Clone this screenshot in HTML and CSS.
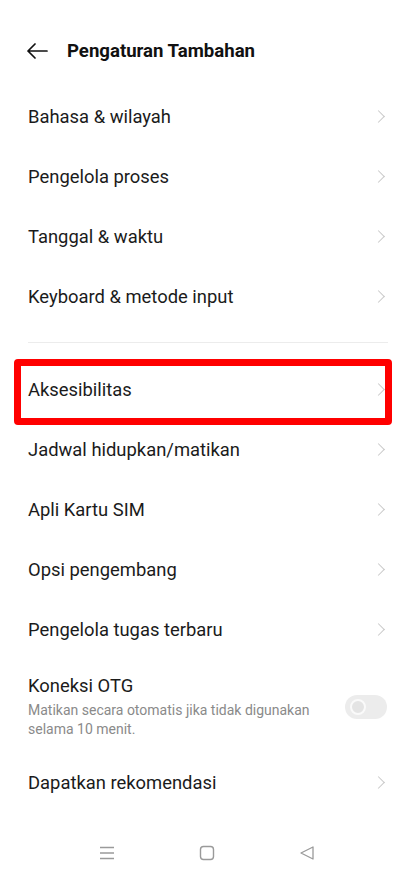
FILE: index.html
```html
<!DOCTYPE html>
<html lang="id">
<head>
    <meta charset="UTF-8">
    <meta name="viewport" content="width=device-width, initial-scale=1.0">
    <title>Pengaturan Tambahan</title>
    <link rel="stylesheet" href="styles.css">
</head>
<body>
    <header class="topbar">
        <svg class="back" width="22" height="16" viewBox="0 0 22 16">
            <path d="M21 8H2M9 1L2 8l7 7" fill="none" stroke="#111" stroke-width="1.7" stroke-linecap="round" stroke-linejoin="round"/>
        </svg>
        <h1>Pengaturan Tambahan</h1>
    </header>

    <ul class="list">
        <li class="row"><span>Bahasa &amp; wilayah</span><i class="chev"></i></li>
        <li class="row"><span>Pengelola proses</span><i class="chev"></i></li>
        <li class="row"><span>Tanggal &amp; waktu</span><i class="chev"></i></li>
        <li class="row"><span>Keyboard &amp; metode input</span><i class="chev"></i></li>
    </ul>

    <hr class="divider">

    <ul class="list">
        <li class="row marked"><span>Aksesibilitas</span><i class="chev"></i></li>
        <li class="row"><span>Jadwal hidupkan/matikan</span><i class="chev"></i></li>
        <li class="row"><span>Apli Kartu SIM</span><i class="chev"></i></li>
        <li class="row"><span>Opsi pengembang</span><i class="chev"></i></li>
        <li class="row"><span>Pengelola tugas terbaru</span><i class="chev"></i></li>
        <li class="row tall">
            <div class="text">
                <span>Koneksi OTG</span>
                <p class="sub">Matikan secara otomatis jika tidak digunakan selama 10 menit.</p>
            </div>
            <div class="toggle"><div class="knob"></div></div>
        </li>
        <li class="row"><span>Dapatkan rekomendasi</span><i class="chev"></i></li>
    </ul>

    <nav class="navbar">
        <svg width="16" height="14" viewBox="0 0 16 14">
            <path d="M1 1.5h14M1 7h14M1 12.5h14" stroke="#9a9a9a" stroke-width="1.3"/>
        </svg>
        <svg width="16" height="16" viewBox="0 0 16 16">
            <rect x="1.5" y="1.5" width="13" height="13" rx="3" fill="none" stroke="#9a9a9a" stroke-width="1.4"/>
        </svg>
        <svg width="16" height="16" viewBox="0 0 16 16">
            <path d="M14 2L2 8l12 6z" fill="none" stroke="#9a9a9a" stroke-width="1.3" stroke-linejoin="round"/>
        </svg>
    </nav>
</body>
</html>
```

FILE: styles.css
```css
body {
    margin: 0;
    background: #fff;
    font-family: Roboto, "Liberation Sans", sans-serif;
    color: #1b1b1b;
}

.topbar {
    display: flex;
    align-items: center;
    height: 24px;
    padding: 39px 0 0 26px;
    margin-bottom: 23px;
}
.back {
    margin-right: 19px;
}
.topbar h1 {
    margin: 0;
    font-size: 18.6px;
    font-weight: 700;
    color: #111;
}

.list {
    list-style: none;
    margin: 0;
    padding: 0;
}
.row {
    position: relative;
    display: flex;
    align-items: center;
    justify-content: space-between;
    height: 60px;
    padding: 0 20px 0 28px;
    font-size: 18.4px;
}
.chev {
    width: 8px;
    height: 8px;
    margin-right: 3px;
    border-top: 1.4px solid #c9c9c9;
    border-right: 1.4px solid #c9c9c9;
    transform: rotate(45deg);
}

.divider {
    border: 0;
    border-top: 1px solid #ececec;
    margin: 16px 18px 16px 28px;
}

/* red highlight frame around the selected entry */
.marked::after {
    content: "";
    position: absolute;
    left: 14px;
    right: 14px;
    top: 0;
    height: 52px;
    border: 7px solid #ff0000;
    border-radius: 4px;
}

.row.tall {
    height: auto;
    padding-top: 15px;
    padding-bottom: 13px;
}
.text span {
    display: block;
    line-height: 24px;
}
.sub {
    margin: 3px 0 0;
    width: 295px;
    font-size: 14px;
    line-height: 19px;
    color: #8a8a8a;
}
.toggle {
    width: 42px;
    height: 24px;
    margin-right: -1px;
    border-radius: 12px;
    background: #ececec;
}
.knob {
    width: 12px;
    height: 12px;
    margin: 4px 0 0 5px;
    border: 2px solid #fafafa;
    border-radius: 50%;
    background: #e4e4e4;
}

.navbar {
    display: flex;
    justify-content: center;
    align-items: center;
    gap: 84px;
    height: 61px;
    padding: 10px 0 0 8px;
}
```
